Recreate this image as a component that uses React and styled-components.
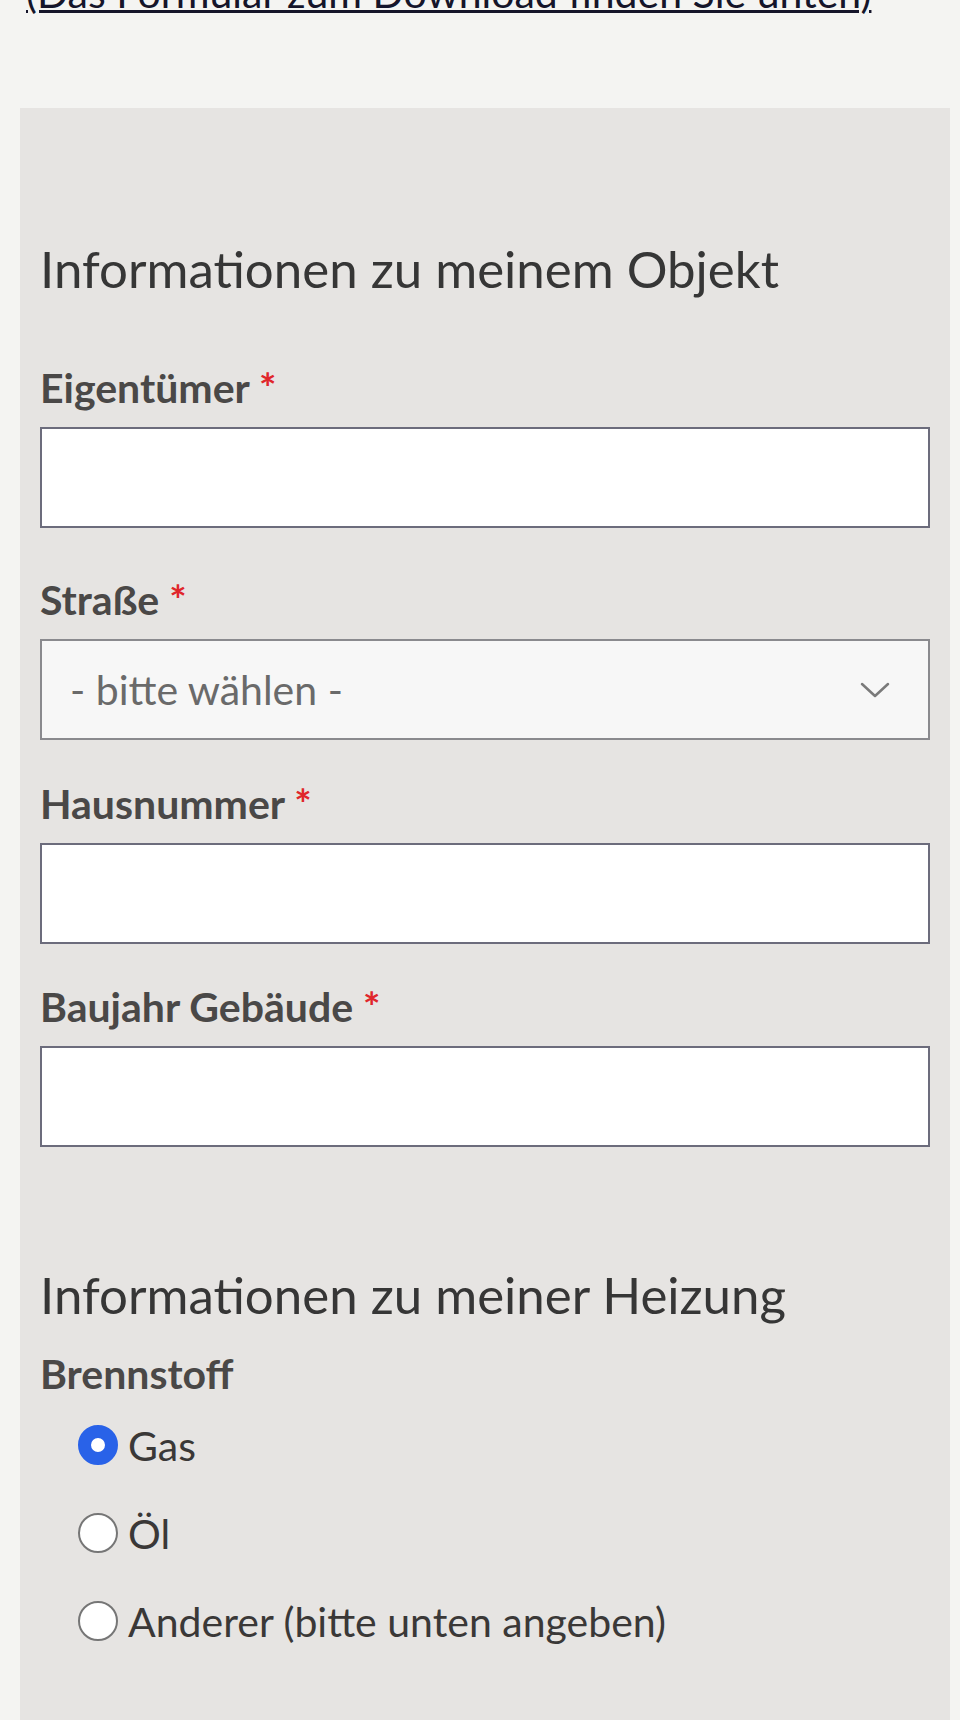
import styled, { createGlobalStyle } from "styled-components"

const GlobalStyle = createGlobalStyle`
    html, body {
        margin: 0;
        padding: 0;
        background: #f4f4f2;
        font-family: Lato, "Noto Sans", sans-serif;
    }
`

const fields = [
    { label: "Eigentümer", type: "input", after: 44 },
    { label: "Straße", type: "select", after: 36 },
    { label: "Hausnummer", type: "input", after: 35 },
    { label: "Baujahr Gebäude", type: "input", after: 0 },
]

const fuels = [
    { label: "Gas", checked: true },
    { label: "Öl", checked: false },
    { label: "Anderer (bitte unten angeben)", checked: false },
]

function Chevron() {
    return (
        <svg width="30" height="16" viewBox="0 0 30 16" fill="none">
            <path
                d="M2 2 L15 14 L28 2"
                stroke="#7a7a7a"
                strokeWidth="2.5"
                strokeLinecap="round"
                strokeLinejoin="round"
            />
        </svg>
    )
}

function App() {
    return (
        <Page>
            <GlobalStyle />
            <Intro>
                <a href="#download">(Das Formular zum Download finden Sie unten)</a>
            </Intro>
            <Panel>
                <Heading>Informationen zu meinem Objekt</Heading>
                {fields.map(f => (
                    <Field key={f.label} $after={f.after}>
                        <Label>
                            {f.label} <Required>*</Required>
                        </Label>
                        {f.type == "select" ? (
                            <SelectBox>
                                <span>- bitte wählen -</span>
                                <Chevron />
                            </SelectBox>
                        ) : (
                            <Input type="text" />
                        )}
                    </Field>
                ))}

                <Heading $top={117} $bottom={20}>
                    Informationen zu meiner Heizung
                </Heading>
                <Label $gap={0}>Brennstoff</Label>
                <RadioList>
                    {fuels.map(f => (
                        <RadioRow key={f.label}>
                            <Radio $checked={f.checked} />
                            {f.label}
                        </RadioRow>
                    ))}
                </RadioList>
            </Panel>
        </Page>
    )
}

const Page = styled.div`
    height: 1720px;
    padding: 0 10px 0 20px;
    overflow: hidden;
`

const Intro = styled.p`
    margin: -29px 0 93px 6px;
    font-size: 41px;
    line-height: 44px;
    a {
        color: #15152a;
        text-decoration: underline;
        text-decoration-thickness: 3px;
    }
`

const Panel = styled.div`
    box-sizing: border-box;
    background: #e6e4e2;
    padding: 130px 20px 30px;
    min-height: 1612px;
`

const Heading = styled.h2`
    margin: ${p => p.$top || 0}px 0 ${p => (p.$bottom == null ? 60 : p.$bottom)}px;
    font-size: 51px;
    line-height: 62px;
    font-weight: 400;
    color: #363636;
`

const Field = styled.div`
    margin-bottom: ${p => p.$after}px;
`

const Label = styled.div`
    font-size: 41px;
    line-height: 55px;
    font-weight: 700;
    color: #4a4847;
    margin-bottom: ${p => (p.$gap == null ? 12 : p.$gap)}px;
`

const Required = styled.span`
    color: #e0262b;
`

const Input = styled.input`
    display: block;
    box-sizing: border-box;
    width: 100%;
    height: 101px;
    border: 2px solid #6c6c7c;
    background: #fff;
    border-radius: 0;
    outline: none;
`

const SelectBox = styled.div`
    box-sizing: border-box;
    height: 101px;
    display: flex;
    align-items: center;
    justify-content: space-between;
    padding: 0 38px 0 28px;
    border: 2px solid #8a8a8e;
    background: #f7f7f7;
    font-size: 41px;
    color: #6a6a6a;
`

const RadioList = styled.div`
    padding: 0 0 0 38px;
`

const RadioRow = styled.label`
    height: 88px;
    display: flex;
    align-items: center;
    gap: 10px;
    font-size: 41px;
    color: #3a3837;
`

const Radio = styled.span`
    box-sizing: border-box;
    width: 40px;
    height: 40px;
    border-radius: 50%;
    background: #fff;
    border: ${p => (p.$checked ? "13px solid #2962e8" : "2px solid #767676")};
`

export default App
